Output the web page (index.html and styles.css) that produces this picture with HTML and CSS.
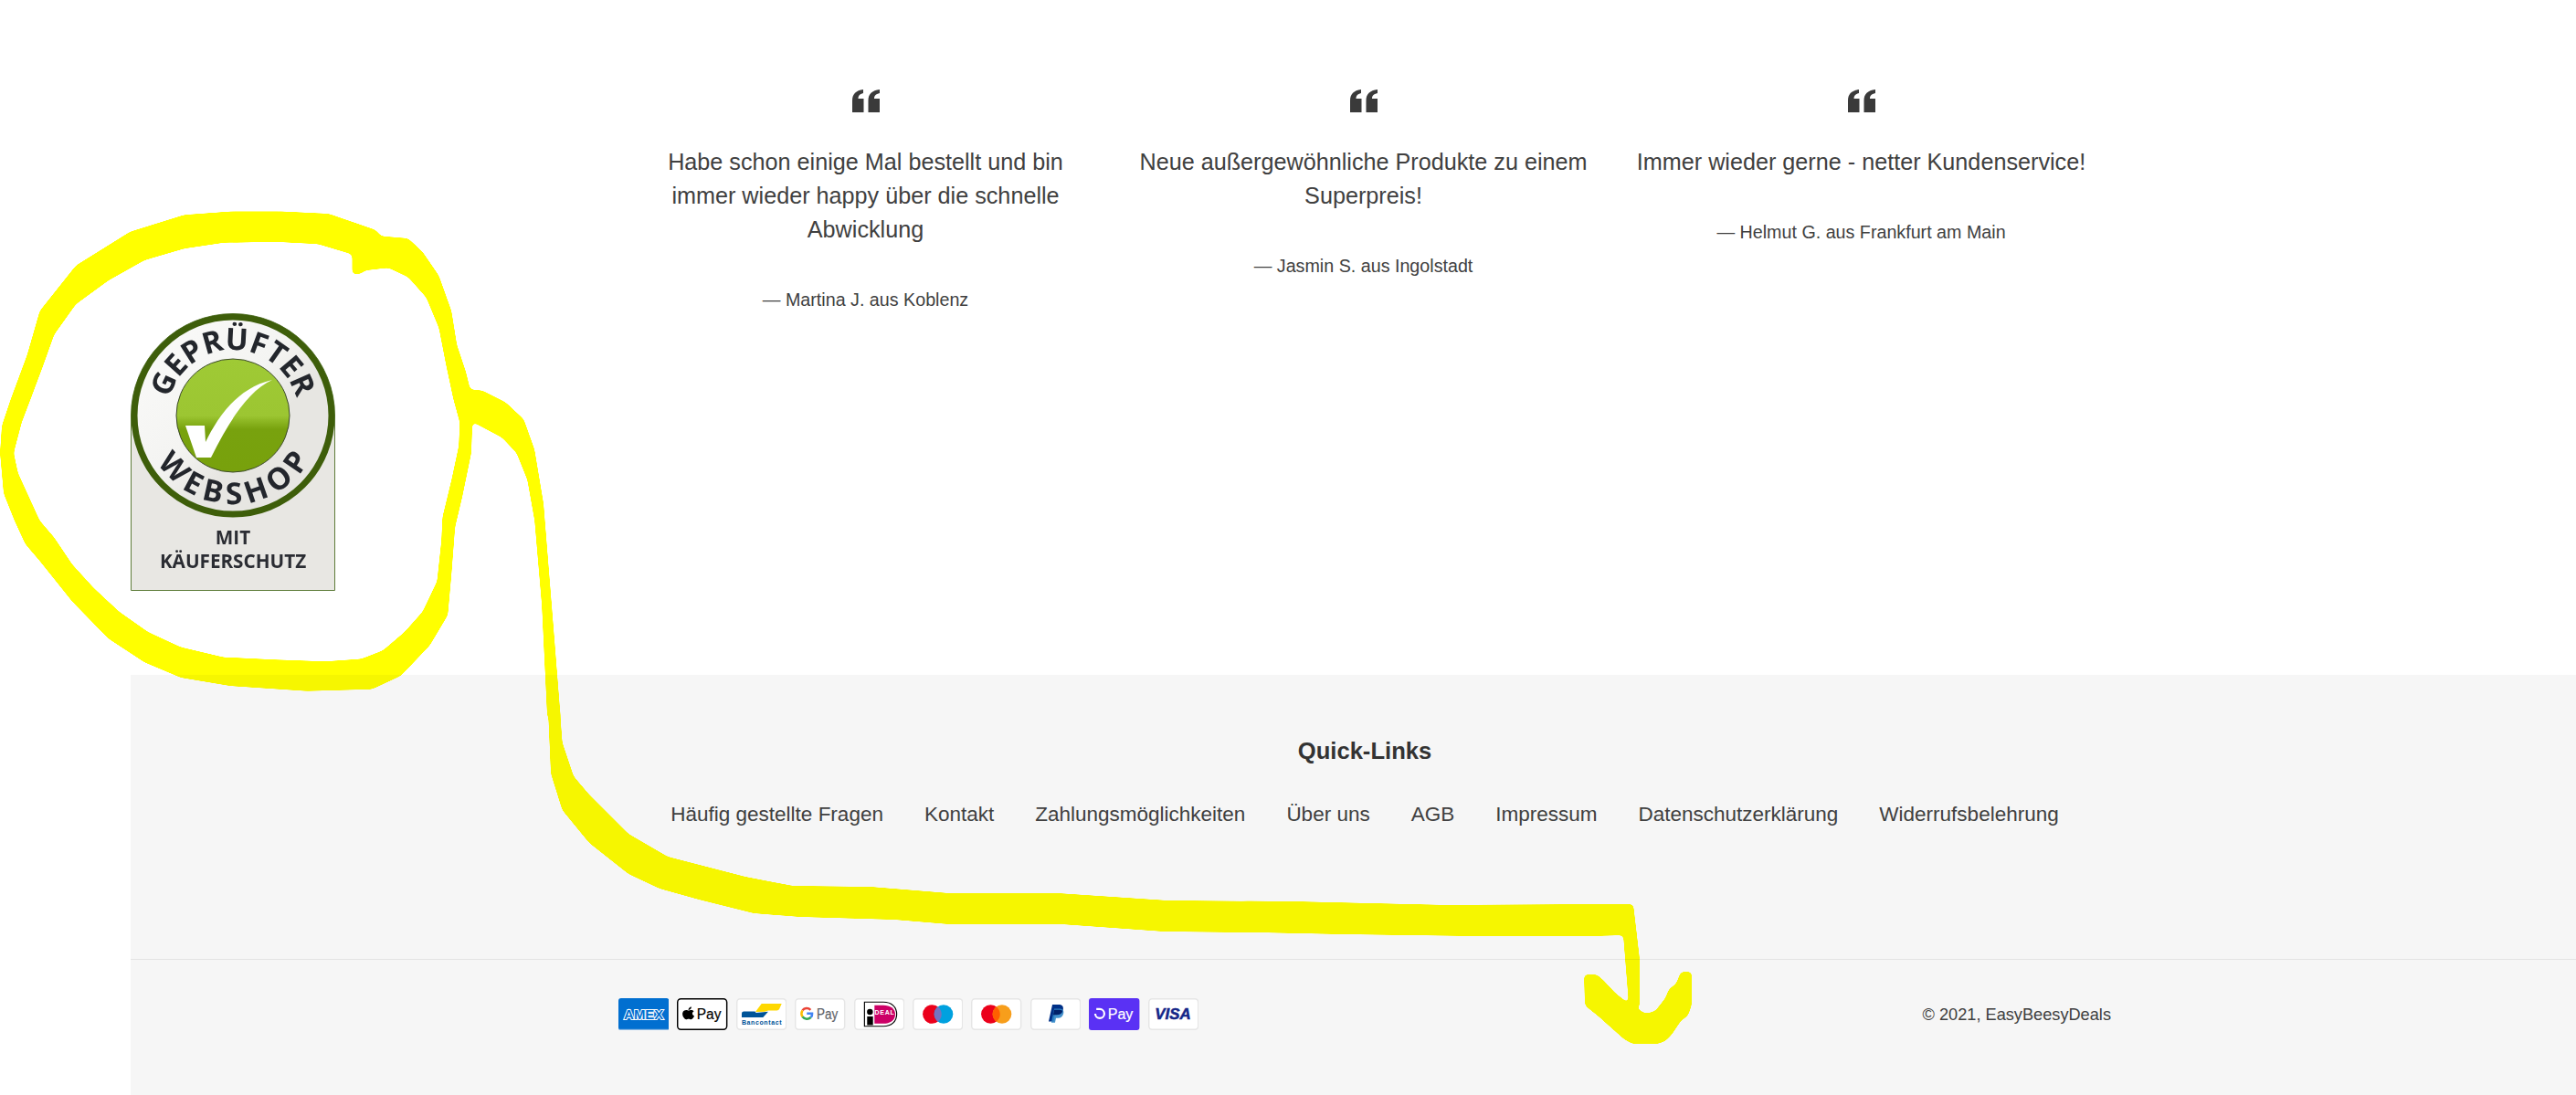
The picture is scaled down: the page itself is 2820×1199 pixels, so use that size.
FILE: index.html
```html
<!DOCTYPE html>
<html lang="de">
<head>
<meta charset="utf-8">
<title>EasyBeesyDeals</title>
<link rel="stylesheet" href="styles.css">
</head>
<body>
<div class="page">
  <section class="top">
    <div class="badge">
      <svg class="badge-svg" width="224" height="304" viewBox="0 0 224 304">
        <defs>
          <linearGradient id="disc" x1="0" y1="0" x2="1" y2="1">
            <stop offset="0" stop-color="#fbfbfa"/>
            <stop offset=".45" stop-color="#f4f4f2"/>
            <stop offset=".62" stop-color="#e7e6e2"/>
            <stop offset="1" stop-color="#e7e6e2"/>
          </linearGradient>
          <linearGradient id="ball" x1="0" y1="0" x2="0" y2="1">
            <stop offset="0" stop-color="#9fca35"/>
            <stop offset=".5" stop-color="#9cc632"/>
            <stop offset=".62" stop-color="#78a20e"/>
            <stop offset="1" stop-color="#78a10c"/>
          </linearGradient>
          <path id="arcTop" d="M 40 112 A 72 72 0 0 1 184 112"/>
          <path id="arcBottom" d="M 15 112 A 97 97 0 0 0 209 112"/>
        </defs>
        <path class="badge-body" d="M.5 112 A111.5 111.5 0 0 1 223.500 112 V303.500 H.5 Z"/>
        <circle cx="112" cy="112" r="108" fill="url(#disc)" stroke="#3e5e0a" stroke-width="7"/>
        <circle cx="112" cy="112" r="62" fill="url(#ball)" stroke="#3c4a2a" stroke-width="1"/>
        <path fill="#fff" d="M60 123 L81 123 L82 141 C94 117 115 82 155 73 C130 84 108 117 88 158 L72 158 Z"/>
        <text class="badge-arc"><textPath href="#arcTop" startOffset="50%" text-anchor="middle">GEPRÜFTER</textPath></text>
        <text class="badge-arc badge-arc-wide"><textPath href="#arcBottom" startOffset="51.500%" text-anchor="middle">WEBSHOP</textPath></text>
        <text class="badge-small" x="112" y="253" text-anchor="middle">MIT</text>
        <text class="badge-small" x="112" y="279" text-anchor="middle">KÄUFERSCHUTZ</text>
      </svg>
    </div>
    <div class="quotes">
      <figure class="quote">
        <svg class="quote-mark" width="30" height="25" viewBox="0 0 30 25"><path d="M0 25V12C0 5 4 1 12 0V4C8 5 6.500 7 6.500 10H12.500V25ZM17.500 25V12C17.500 5 21.500 1 30 0V4C25.500 5 24 7 24 10H30V25Z"/></svg>
        <blockquote class="quote-text">Habe schon einige Mal bestellt und bin immer wieder happy über die schnelle Abwicklung</blockquote>
        <figcaption class="quote-author">— Martina J. aus Koblenz</figcaption>
      </figure>
      <figure class="quote">
        <svg class="quote-mark" width="30" height="25" viewBox="0 0 30 25"><path d="M0 25V12C0 5 4 1 12 0V4C8 5 6.500 7 6.500 10H12.500V25ZM17.500 25V12C17.500 5 21.500 1 30 0V4C25.500 5 24 7 24 10H30V25Z"/></svg>
        <blockquote class="quote-text">Neue außergewöhnliche Produkte zu einem Superpreis!</blockquote>
        <figcaption class="quote-author">— Jasmin S. aus Ingolstadt</figcaption>
      </figure>
      <figure class="quote">
        <svg class="quote-mark" width="30" height="25" viewBox="0 0 30 25"><path d="M0 25V12C0 5 4 1 12 0V4C8 5 6.500 7 6.500 10H12.500V25ZM17.500 25V12C17.500 5 21.500 1 30 0V4C25.500 5 24 7 24 10H30V25Z"/></svg>
        <blockquote class="quote-text">Immer wieder gerne - netter Kundenservice!</blockquote>
        <figcaption class="quote-author">— Helmut G. aus Frankfurt am Main</figcaption>
      </figure>
    </div>
  </section>

  <footer class="footer">
    <div class="footer-upper">
      <h2 class="footer-title">Quick-Links</h2>
      <nav class="footer-nav">
        <a class="footer-link">Häufig gestellte Fragen</a>
        <a class="footer-link">Kontakt</a>
        <a class="footer-link">Zahlungsmöglichkeiten</a>
        <a class="footer-link">Über uns</a>
        <a class="footer-link">AGB</a>
        <a class="footer-link">Impressum</a>
        <a class="footer-link">Datenschutzerklärung</a>
        <a class="footer-link">Widerrufsbelehrung</a>
      </nav>
    </div>
    <div class="footer-lower">
      <div class="payments">
        <svg class="pay" viewBox="0 0 38 24"><rect width="38" height="24" rx="2" fill="#016fd0"/><rect x=".5" y="23.200" width="37" height=".8" fill="#8ab8e4"/><text class="pay-amex" x="19" y="16" text-anchor="middle" textLength="29.600" lengthAdjust="spacingAndGlyphs">AMEX</text></svg>
        <svg class="pay" viewBox="0 0 38 24"><rect x=".5" y=".5" width="37" height="23" rx="2.500" fill="#fff" stroke="#000"/><path d="M11.200 8.200c.5-.6.8-1.300.7-2.100-.7 0-1.500.5-2 1.100-.4.500-.8 1.300-.7 2 .8.100 1.500-.4 2-1zM11.900 9.300c-1.100-.1-2 .6-2.500.6s-1.300-.6-2.200-.6c-1.100 0-2.100.7-2.700 1.600-1.100 2-.3 5 .8 6.600.5.800 1.200 1.700 2 1.600.8 0 1.100-.5 2.100-.5s1.300.5 2.100.5c.9 0 1.400-.8 2-1.600.6-.9.900-1.800.9-1.900 0 0-1.700-.7-1.700-2.600 0-1.700 1.300-2.400 1.400-2.500-.8-1.100-2-1.300-2.200-1.200z" transform="translate(.8 2.200) scale(.85 .72)"/><text class="pay-word pay-black" x="14.900" y="15.600" textLength="18.300" lengthAdjust="spacingAndGlyphs">Pay</text></svg>
        <svg class="pay" viewBox="0 0 38 24"><rect x=".5" y=".5" width="37" height="23" rx="2.500" fill="#fff" stroke="#e6e6e6"/><g transform="translate(0 .7)"><path d="M19 3.400H34.100L32.300 7.600Q31.800 8.500 30.500 8.500H24L21.500 9.400L14.400 9.600Z" fill="#ffd800"/><path d="M4.100 10.800Q4.100 9.200 5.700 9.200H14L14.900 10.300L24 9.400L20.100 13.700H4.100Z" fill="#005498"/></g><text class="pay-banc" x="19" y="20.200" text-anchor="middle" textLength="29.900" lengthAdjust="spacing">Bancontact</text></svg>
        <svg class="pay" viewBox="0 0 38 24"><rect x=".5" y=".5" width="37" height="23" rx="2.500" fill="#fff" stroke="#e6e6e6"/><g fill="none" stroke-width="1.700" transform="translate(-.9 -.5)"><path d="M12.800 9.300A4 4 0 0 0 6.700 9.600" stroke="#ea4335"/><path d="M6.700 9.600a4.600 4.600 0 0 0 0 4.800" stroke="#fbbc04"/><path d="M6.700 14.400a4.300 4.300 0 0 0 6.300.5" stroke="#34a853"/><path d="M13 14.900c.7-.7 1.100-1.600 1-2.900H10" stroke="#4285f4"/></g><text class="pay-word pay-grey" x="16.500" y="15.600" textLength="16" lengthAdjust="spacingAndGlyphs">Pay</text></svg>
        <svg class="pay" viewBox="0 0 38 24"><rect x=".5" y=".5" width="37" height="23" rx="2.500" fill="#fff" stroke="#e6e6e6"/><path d="M7.800 2.900H22C28 2.900 32 6.500 32 12C32 17.500 28 21.100 22 21.100H7.800Z" fill="#fff" stroke="#000" stroke-width=".8"/><path d="M15.300 5.300H22C27 5.300 30.900 7.700 30.900 12.100C30.900 16.500 27 19 22 19H15.300Z" fill="#cc0066"/><circle cx="11.900" cy="10.300" r="2.200"/><rect x="9.800" y="13.700" width="4.400" height="6.500"/><text class="pay-ideal" x="22.700" y="12.100" text-anchor="middle" textLength="14.500" lengthAdjust="spacing">DEAL</text></svg>
        <svg class="pay" viewBox="0 0 38 24"><rect x=".5" y=".5" width="37" height="23" rx="2.500" fill="#fff" stroke="#e6e6e6"/><circle cx="14.700" cy="12" r="7.100" fill="#eb001b"/><circle cx="23.300" cy="12" r="7.100" fill="#00a1df"/><path d="M19 6.350a7.100 7.100 0 0 1 0 11.300 7.100 7.100 0 0 1 0-11.300z" fill="#7673c0"/></svg>
        <svg class="pay" viewBox="0 0 38 24"><rect x=".5" y=".5" width="37" height="23" rx="2.500" fill="#fff" stroke="#e6e6e6"/><circle cx="14.700" cy="12" r="7.100" fill="#eb001b"/><circle cx="23.300" cy="12" r="7.100" fill="#f79e1b"/><path d="M19 6.350a7.100 7.100 0 0 1 0 11.300 7.100 7.100 0 0 1 0-11.300z" fill="#ff5f00"/></svg>
        <svg class="pay" viewBox="0 0 38 24"><rect x=".5" y=".5" width="37" height="23" rx="2.500" fill="#fff" stroke="#e6e6e6"/><path d="M16.500 4.800h4.700c2.400 0 3.800 1.300 3.400 3.500-.5 2.900-2.400 4.200-4.800 4.200h-1.500l-.9 5h-3.700z" fill="#003087"/><path d="M17.900 7.800h3.800c2.200 0 3.600 1 3.200 3.300-.5 2.700-2.200 3.900-4.400 3.900h-1.300l-.7 3.300h-2.800z" fill="#3086c8" opacity=".9"/><path d="M17.900 8.800h3c1.200 0 2.500.2 3.300.8-.5 2.100-2.100 3-4.400 3h-2.700z" fill="#012169"/></svg>
        <svg class="pay" viewBox="0 0 38 24"><rect width="38" height="24" rx="2" fill="#5a31f4"/><path d="M5.600 8.200H8.200a3.400 3.400 0 1 1-3.400 3.400" fill="none" stroke="#fff" stroke-width="1.500"/><text class="pay-word pay-white" x="14.200" y="15.600" textLength="19" lengthAdjust="spacingAndGlyphs">Pay</text></svg>
        <svg class="pay" viewBox="0 0 38 24"><rect x=".5" y=".5" width="37" height="23" rx="2.500" fill="#fff" stroke="#e6e6e6"/><text class="pay-visa" x="18.500" y="16" text-anchor="middle" textLength="27" lengthAdjust="spacingAndGlyphs">VISA</text></svg>
      </div>
      <p class="copyright">© 2021, EasyBeesyDeals</p>
    </div>
  </footer>

  <svg class="scribble" width="2820" height="1199" viewBox="0 0 2820 1199" aria-hidden="true">
    <defs>
      <filter id="smooth" filterUnits="userSpaceOnUse" x="0" y="0" width="2820" height="1199" color-interpolation-filters="sRGB">
        <feGaussianBlur stdDeviation="2.500"/>
        <feComponentTransfer>
          <feFuncA type="linear" slope="14" intercept="-6.500"/>
        </feComponentTransfer>
      </filter>
    </defs>
    <g filter="url(#smooth)">
      <path fill-rule="evenodd" transform="translate(0 200) scale(.3954 .36990)" d="M1055 158 L1130 165 L1170 205 L1215 275 L1250 380 L1265 480 L1290 560 L1302 612 L1335 615 L1400 650 L1450 700 L1480 790 L1505 950 L1520 1150 L1535 1350 L1552 1580 L1515 1580 L1500 1250 L1480 1000 L1460 880 L1430 800 L1390 755 L1308 708 L1305 800 L1280 930 L1260 1020 L1250 1160 L1240 1280 L1190 1370 L1110 1460 L1030 1500 L850 1505 L640 1490 L500 1465 L400 1420 L300 1350 L200 1240 L110 1120 L70 1070 L40 1000 L10 920 L0 800 L5 720 L30 640 L75 510 L110 380 L210 245 L360 145 L510 95 L640 85 L780 85 L910 92 L1040 140 Z M975 212 L880 182 L760 175 L620 178 L510 195 L400 230 L300 290 L210 360 L150 450 L120 540 L85 640 L60 710 L38 800 L50 860 L80 930 L110 1000 L150 1050 L200 1130 L260 1200 L330 1270 L410 1330 L500 1375 L620 1405 L760 1412 L900 1417 L1000 1410 L1060 1385 L1120 1330 L1170 1270 L1210 1180 L1222 1060 L1225 990 L1250 880 L1270 780 L1273 710 L1255 640 L1235 540 L1215 430 L1180 340 L1130 280 L1075 252 L1010 260 L1000 270 L975 272 Z"/>
      <path d="M613 778 L615.600 813 L628 850 L645 870 L688 913 L731 938 L816 960 L868 970 L953 971 L1039 978 L1158 978 L1278 986 L1415 987 L1586 991 L1757 990 L1788 990 L1795 1050 L1795 1103 L1789 1103 L1802 1110 L1812 1107 L1823 1093 L1827 1083 L1835 1077 L1840 1064 L1852 1064 L1852 1100 L1848 1112 L1840 1118 L1830 1133 L1823 1140 L1815 1143 L1787 1143 L1778 1138 L1760 1122 L1750 1113 L1735 1101 L1734 1067 L1748 1067 L1755 1073 L1768 1087 L1783 1099 L1777 1024 L1744 1025 L1615.500 1025 L1470 1023 L1376 1021 L1274 1020 L1162 1012 L1039 1012 L979 1007 L876 1004 L825 1000 L765 985 L722 973 L688 957 L645 923 L615.500 887 L603 847 L600 778 Z"/>
    </g>
  </svg>
</div>
</body>
</html>
```

FILE: styles.css
```css
* { box-sizing: border-box; }

html, body {
  margin: 0;
  padding: 0;
  background: #fff;
}

body {
  font-family: "Liberation Sans", Arial, sans-serif;
  color: #404040;
}

.page {
  position: relative;
  width: 2820px;
  height: 1199px;
  overflow: hidden;
}

.top {
  display: flex;
  align-items: flex-start;
  height: 739px;
  padding-left: 143px;
}

.badge {
  flex: none;
  width: 224px;
  height: 304px;
  margin-top: 343px;
}

.badge-svg {
  display: block;
  filter: blur(.4px);
}

.badge-body {
  fill: #e8e7e3;
  stroke: #5f7d3a;
  stroke-width: 1;
}

.badge-arc {
  font-family: "Open Sans", sans-serif;
  font-weight: 700;
  font-size: 33px;
  fill: #23262c;
}

.badge-arc-wide {
  letter-spacing: 6px;
}

.badge-small {
  font-family: "Open Sans", sans-serif;
  font-weight: 700;
  font-size: 20.700px;
  fill: #2b2d33;
}

.quotes {
  display: flex;
  gap: 49px;
  margin-left: 332.500px;
  padding-top: 98px;
}

.quote {
  width: 496px;
  margin: 0;
  text-align: center;
}

.quote-mark {
  display: block;
  margin: 0 auto;
  fill: #3a3a3a;
}

.quote-text {
  margin: 36px 0 0;
  font-size: 25.200px;
  line-height: 37px;
}

.quote-author {
  margin-top: 43px;
  font-size: 19.700px;
  line-height: 30px;
}

.footer {
  height: 460px;
  margin-left: 143px;
  background: #f6f6f6;
}

.footer-upper {
  height: 312px;
  padding: 66px 0 0 534px;
  border-bottom: 1px solid #e4e4e4;
}

.footer-title {
  width: 1634px;
  margin: 0;
  font-size: 25.600px;
  line-height: 34px;
  font-weight: 700;
  text-align: center;
  color: #333;
}

.footer-nav {
  display: flex;
  justify-content: center;
  gap: 45px;
  width: 1634px;
  margin-top: 36px;
  font-size: 22.500px;
  line-height: 34px;
}

.footer-link {
  color: #404040;
}

.footer-lower {
  display: flex;
  align-items: center;
  justify-content: space-between;
  width: 1634px;
  margin-left: 534px;
  padding-top: 42px;
}

.payments {
  display: flex;
  gap: 9px;
}

.pay {
  display: block;
  width: 55.400px;
  height: 35px;
}

.pay-amex {
  font: 700 10.500px "Liberation Sans", sans-serif;
  fill: #016fd0;
  stroke: #fff;
  stroke-width: 1.400px;
  paint-order: stroke;
}

.pay-word {
  font: 400 11.500px "Liberation Sans", sans-serif;
  stroke-width: .15px;
}

.pay-black { fill: #000; stroke: #000; }
.pay-grey { fill: #5f6368; stroke: #5f6368; }
.pay-white { fill: #fff; stroke: #fff; }

.pay-banc {
  font: 700 4.800px "Liberation Sans", sans-serif;
  fill: #005498;
}

.pay-ideal {
  font: 700 4.800px "Liberation Sans", sans-serif;
  fill: #fff;
}

.pay-visa {
  font: italic 700 11.500px "Liberation Sans", sans-serif;
  fill: #142688;
  stroke: #142688;
  stroke-width: .35px;
}

.copyright {
  margin: 0;
  font-size: 18.200px;
  line-height: 30px;
  color: #404040;
}

.scribble {
  position: absolute;
  top: 0;
  left: 0;
  fill: #ffff00;
  mix-blend-mode: multiply;
  pointer-events: none;
}
```
